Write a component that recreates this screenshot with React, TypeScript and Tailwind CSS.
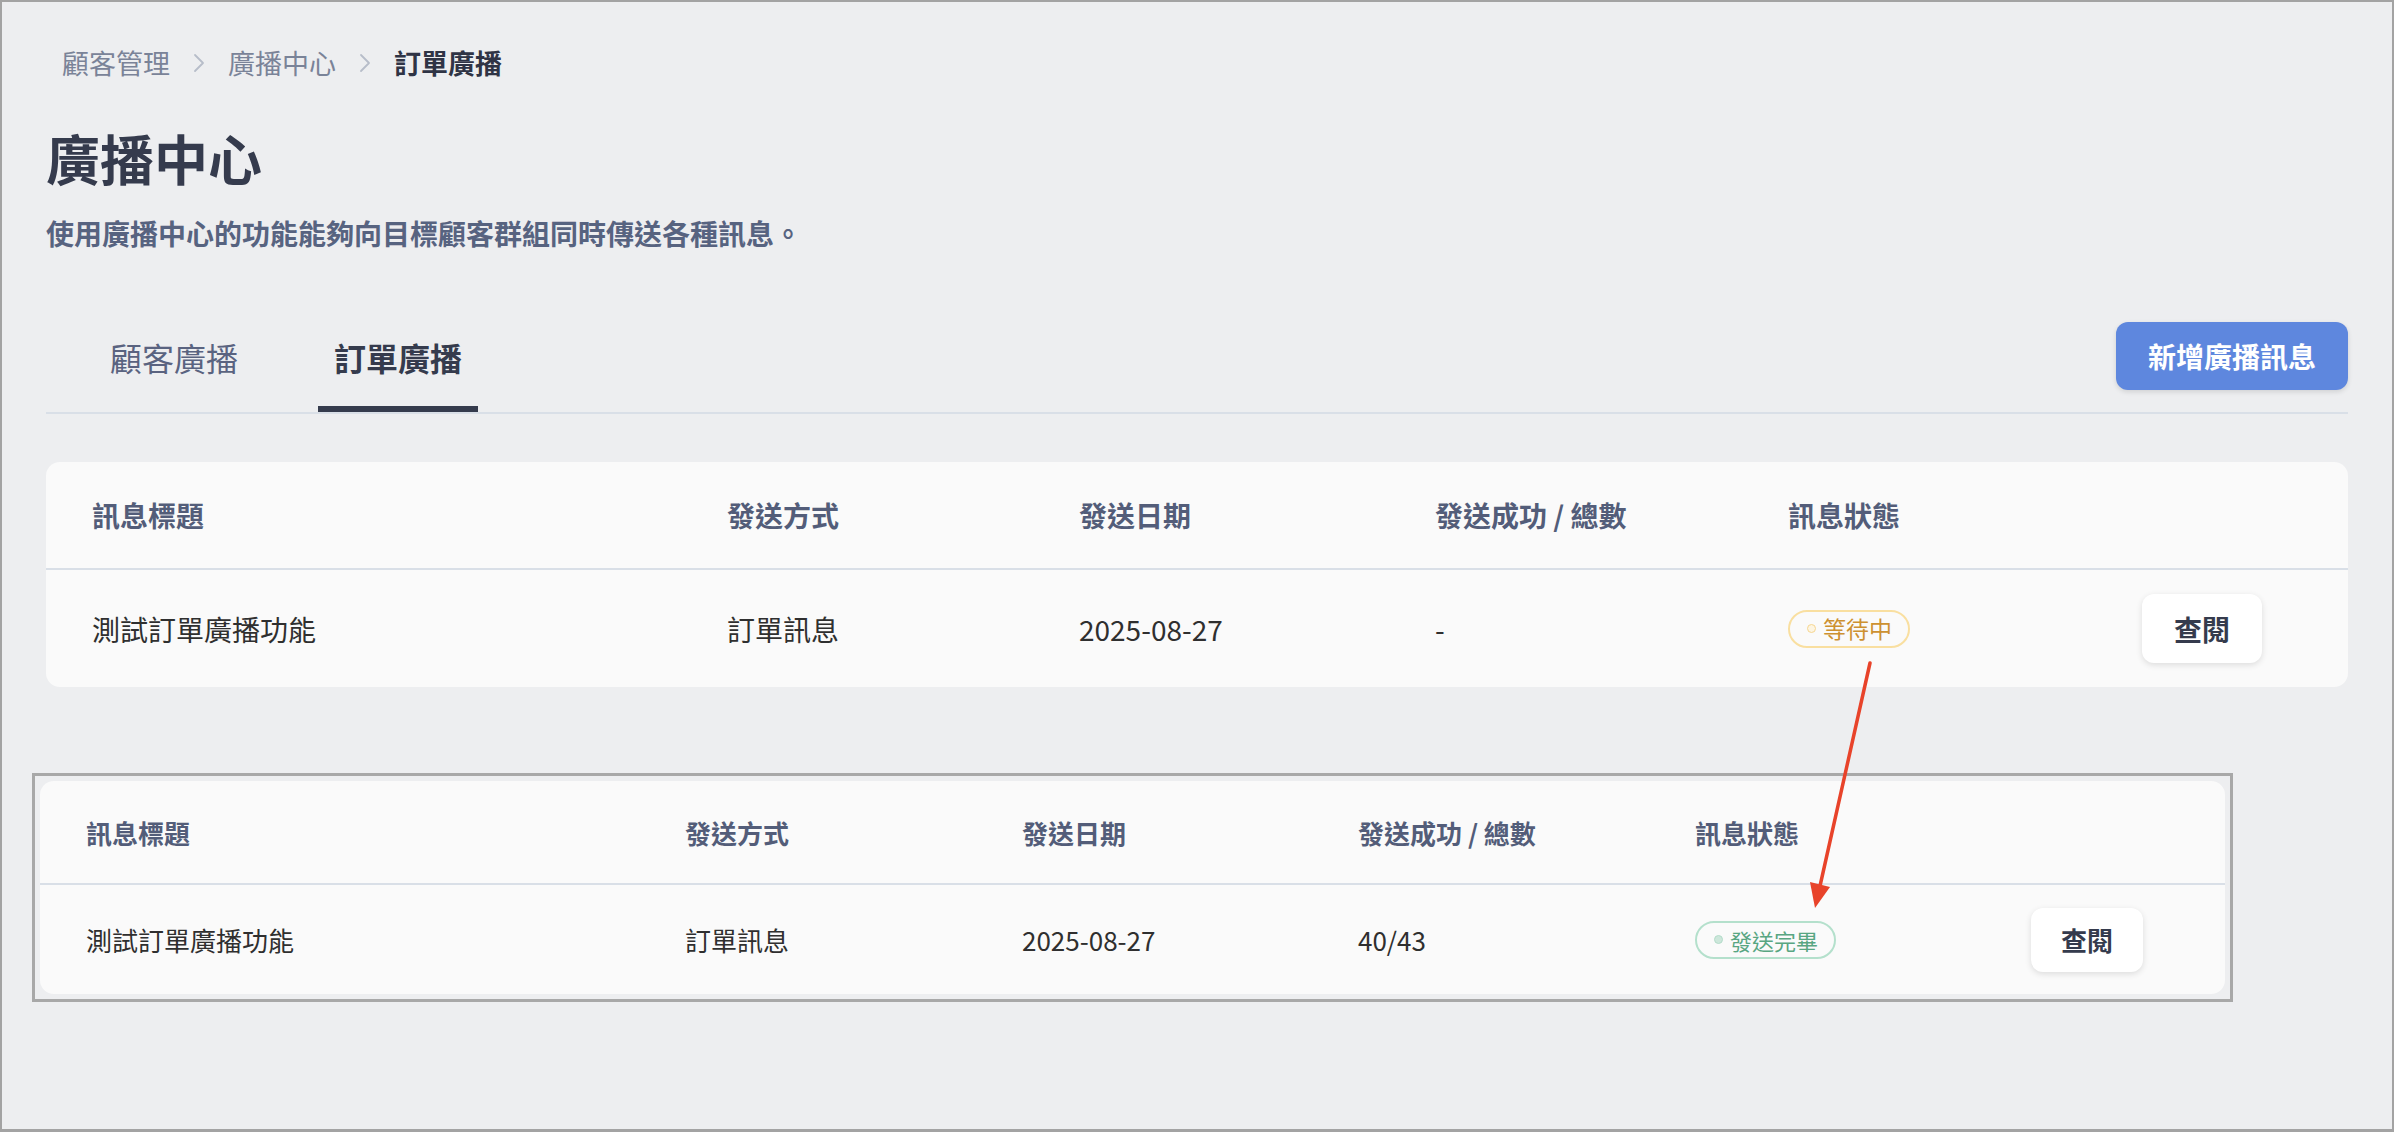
import React from "react";

type Row = {
  title: string;
  method: string;
  date: string;
  count: string;
  status: "waiting" | "done";
};

type Size = {
  cols: string;
  pl: string;
  headH: string;
  bodyH: string;
  headText: string;
  bodyText: string;
  btn: string;
  btnText: string;
  badgeText: string;
};

const big: Size = {
  cols: "grid-cols-[635px_352px_356px_353px_354px_120px]",
  pl: "pl-[46px]",
  headH: "h-[108px]",
  bodyH: "h-[117px]",
  headText: "text-[28px]",
  bodyText: "text-[28px]",
  btn: "w-[120px] h-[69px]",
  btnText: "text-[28px]",
  badgeText: "text-[23px]",
};

const small: Size = {
  cols: "grid-cols-[599px_337px_336px_337px_336px_112px]",
  pl: "pl-[46px]",
  headH: "h-[104px]",
  bodyH: "h-[109px]",
  headText: "text-[26px]",
  bodyText: "text-[26px]",
  btn: "w-[112px] h-[64px]",
  btnText: "text-[26px]",
  badgeText: "text-[22px]",
};

const headers = ["訊息標題", "發送方式", "發送日期", "發送成功 / 總數", "訊息狀態"];

function StatusBadge({ status, size }: { status: Row["status"]; size: Size }) {
  if (status === "waiting") {
    return (
      <span className="inline-flex items-center h-[38px] rounded-full border-2 border-[#f9dfa0] pl-[17px] pr-[16px] gap-[7px]">
        <span className="w-[9px] h-[9px] rounded-full border-[1.5px] border-[#f6d690] bg-[#fdf5e2]" />
        <span className={`${size.badgeText} leading-none text-[#cd9131]`}>等待中</span>
      </span>
    );
  }
  return (
    <span className="inline-flex items-center h-[38px] rounded-full border-2 border-[#b4e0cc] pl-[17px] pr-[16px] gap-[7px]">
      <span className="w-[9px] h-[9px] rounded-full border-[1.5px] border-[#b3dcc9] bg-[#cde7db]" />
      <span className={`${size.badgeText} leading-none text-[#58a682]`}>發送完畢</span>
    </span>
  );
}

function BroadcastTable({ row, size }: { row: Row; size: Size }) {
  return (
    <div className="bg-[#fafafa] rounded-[14px]">
      <div className={`grid ${size.cols} ${size.pl} ${size.headH} items-center border-b-2 border-[#d9dfe7]`}>
        {headers.map((h) => (
          <div key={h} className={`${size.headText} font-bold text-[#535d79]`}>
            {h}
          </div>
        ))}
        <div />
      </div>
      <div className={`grid ${size.cols} ${size.pl} ${size.bodyH} items-center text-[#2f2f2f]`}>
        <div className={size.bodyText}>{row.title}</div>
        <div className={size.bodyText}>{row.method}</div>
        <div className={size.bodyText}>{row.date}</div>
        <div className={size.bodyText}>{row.count}</div>
        <div>
          <StatusBadge status={row.status} size={size} />
        </div>
        <button
          className={`${size.btn} ${size.btnText} bg-white rounded-[12px] font-bold text-[#353b4d] shadow-[0_2px_6px_rgba(0,0,0,0.12)] flex items-center justify-center`}
        >
          查閱
        </button>
      </div>
    </div>
  );
}

function Chevron() {
  return (
    <svg width="12" height="20" viewBox="0 0 12 20" fill="none" className="mx-[23px]">
      <polyline points="2,2 10,10 2,18" stroke="#b7bdc9" strokeWidth="1.8" strokeLinecap="round" strokeLinejoin="round" />
    </svg>
  );
}

export default function App() {
  return (
    <div
      className="relative w-[2394px] h-[1132px] bg-[#edeef0] border-2 border-b-[3px] border-[#a3a3a3] overflow-hidden"
      style={{ fontFamily: '"Noto Sans CJK TC", "Noto Sans", sans-serif' }}
    >
      <div className="px-[44px] pt-[43px]">
        {/* Breadcrumb */}
        <nav className="flex items-center pl-[16px] h-[36px] text-[27px] leading-[36px]">
          <span className="text-[#7a8398]">顧客管理</span>
          <Chevron />
          <span className="text-[#7a8398]">廣播中心</span>
          <Chevron />
          <span className="font-bold text-[#2f3445]">訂單廣播</span>
        </nav>

        {/* Title */}
        <h1 className="mt-[45px] text-[54px] leading-[64px] font-bold text-[#353b4d]">廣播中心</h1>
        <p className="mt-[23px] text-[28px] leading-[40px] font-semibold text-[#576380]">
          使用廣播中心的功能能夠向目標顧客群組同時傳送各種訊息。
        </p>

        {/* Tabs */}
        <div className="mt-[69px] flex items-end justify-between border-b-2 border-[#d9dfe7]">
          <div className="flex items-end pl-[48px] gap-[64px]">
            <div className="px-[16px] pb-[27px] border-b-[6px] border-transparent">
              <span className="block text-[32px] leading-[44px] text-[#5a6380]">顧客廣播</span>
            </div>
            <div className="px-[16px] pb-[27px] border-b-[6px] border-[#353b4d]">
              <span className="block text-[32px] leading-[44px] font-bold text-[#353b4d]">訂單廣播</span>
            </div>
          </div>
          <button className="mb-[22px] h-[68px] px-[32px] rounded-[12px] bg-[#5e87de] text-white text-[28px] font-bold shadow-[0_2px_5px_rgba(0,0,0,0.12)]">
            新增廣播訊息
          </button>
        </div>

        {/* Current table */}
        <div className="mt-[48px]">
          <BroadcastTable
            size={big}
            row={{ title: "測試訂單廣播功能", method: "訂單訊息", date: "2025-08-27", count: "-", status: "waiting" }}
          />
        </div>
      </div>

      {/* After state screenshot */}
      <div className="mt-[86px] ml-[30px] w-[2201px] border-[3px] border-[#a8a8a8] p-[5px]">
        <BroadcastTable
          size={small}
          row={{ title: "測試訂單廣播功能", method: "訂單訊息", date: "2025-08-27", count: "40/43", status: "done" }}
        />
      </div>

      {/* Annotation arrow */}
      <svg className="absolute left-[-2px] top-[-2px] pointer-events-none" width="2394" height="1132">
        <line x1="1870" y1="663" x2="1820" y2="886" stroke="#e8432a" strokeWidth="3.5" strokeLinecap="round" />
        <polygon points="1815,908 1830,887 1810,882" fill="#e8432a" />
      </svg>
    </div>
  );
}
